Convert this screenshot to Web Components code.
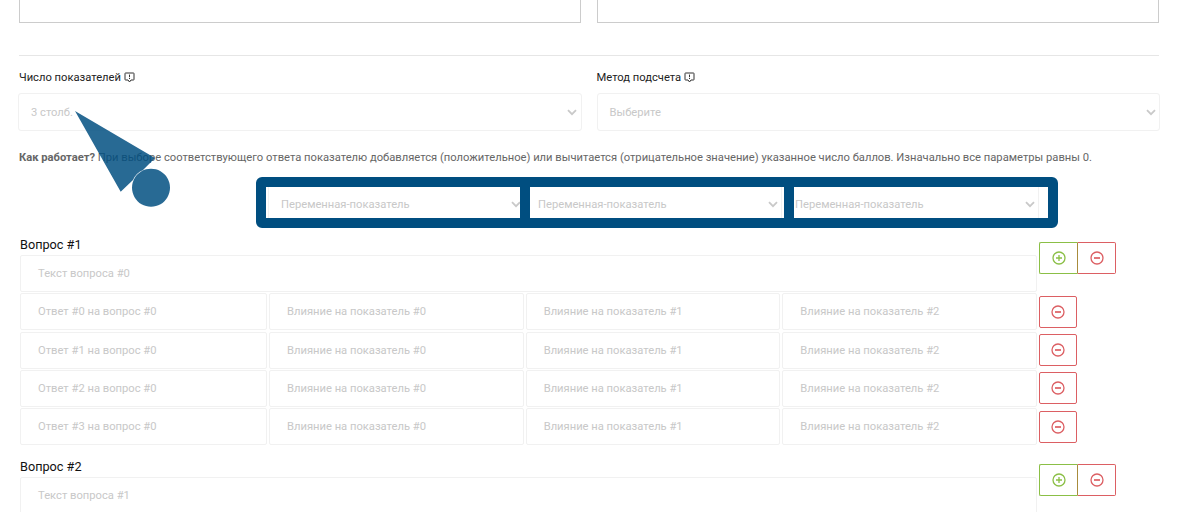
<!DOCTYPE html>
<html lang="ru">
<head>
<meta charset="utf-8">
<title>Тест</title>
<style>
    html, body { margin: 0; height: 512px; overflow: hidden; background: #fff; }
    body { font-family: 'Roboto', 'Liberation Sans', sans-serif; position: relative; }
</style>
</head>
<body>
<test-form></test-form>
<script>
const hintIcon = `<svg width="11" height="11" viewBox="0 0 11 11" fill="none" stroke="#333" stroke-width="1"><path d="M1.5 1h8a.5.5 0 0 1 .5.5v6a.5.5 0 0 1-.5.5H7L5.500 10 4 8H1.500a.5.5 0 0 1-.5-.5v-6a.5.5 0 0 1 .5-.5z"/><path d="M5.500 2.600v2.600M5.500 6v1"/></svg>`
const chevron = `<svg width="10" height="7" viewBox="0 0 10 7" fill="none" stroke="#c9c9c9" stroke-width="1.800"><path d="M1 1.200 5 5.200l4-4"/></svg>`

/**
 * A select look-alike with a placeholder and a chevron.
 */
customElements.define('form-select', class extends HTMLElement {
  constructor () {
    super()
    this.attachShadow({ mode: 'open' }).innerHTML = `
<style>
    :host { display: flex; align-items: center; justify-content: space-between; box-sizing: border-box; height: 38px; padding: 0 3.500px 0 12px; background: #fff; border: 1px solid #f1f1f1; border-radius: 3px; color: #c8c8c8; font-size: 11.200px; }
</style>
<slot></slot>${chevron}`
  }
})

/**
 * A text input look-alike that shows its placeholder.
 */
customElements.define('form-input', class extends HTMLElement {
  constructor () {
    super()
    this.attachShadow({ mode: 'open' }).innerHTML = `
<style>
    :host { display: flex; align-items: center; box-sizing: border-box; height: 37px; padding: 0 17px; background: #fff; border: 1px solid #f1f1f1; border-radius: 2px; color: #c8c8c8; font-size: 11.200px; white-space: nowrap; }
</style>
<slot></slot>`
  }
})

/**
 * A labelled select column.
 */
customElements.define('form-field', class extends HTMLElement {
  constructor () {
    super()
    this.attachShadow({ mode: 'open' }).innerHTML = `
<style>
    :host { display: flex; flex-direction: column; flex: 1 1 0; min-width: 0; }
    .label { display: flex; align-items: center; gap: 3px; height: 14px; margin-bottom: 9px; padding-left: var(--label-inset, 0); color: #222; font-size: 11.200px; }
</style>
<div class="label"><span id="text"></span>${hintIcon}</div>
<form-select><slot></slot></form-select>`
    this.shadowRoot.getElementById('text').textContent = this.getAttribute('label')
  }
})

/**
 * A square outlined button with a plus or minus in a circle.
 */
customElements.define('round-button', class extends HTMLElement {
  constructor () {
    super()
    const plus = this.getAttribute('kind') === 'plus'
    const bar = plus ? '<path d="M7 4v6M4 7h6"/>' : '<path d="M4 7h6" stroke-width="1.700"/>'
    this.attachShadow({ mode: 'open' }).innerHTML = `
<style>
    :host { display: flex; align-items: center; justify-content: center; box-sizing: border-box; width: 38px; height: 32px; background: #fff; border: 1px solid ${plus ? '#8bbf46' : '#dc5f63'}; border-radius: 2px; color: ${plus ? '#8bbf46' : '#dc5f63'}; flex: none; }
    :host([seam]) { width: 39px; border-right-color: #a88c3c; border-radius: 2px 0 0 2px; }
    :host([joined]) { border-left: 0; border-radius: 0 2px 2px 0; }
</style>
<svg width="14" height="14" viewBox="0 0 14 14" fill="none" stroke="currentColor" stroke-width="1.300"><circle cx="7" cy="7" r="6"/>${bar}</svg>`
  }
})

/**
 * One question: a heading, its text input and four answer rows.
 */
customElements.define('question-block', class extends HTMLElement {
  constructor () {
    super()
    const number = Number(this.getAttribute('number'))
    const answers = Number(this.getAttribute('answers'))
    const rows = Array.from({ length: answers }, (_, i) => `
<div class="row">
    <div class="cells">
        <form-input>Ответ #${i} на вопрос #0</form-input>
        <form-input>Влияние на показатель #0</form-input>
        <form-input>Влияние на показатель #1</form-input>
        <form-input>Влияние на показатель #2</form-input>
    </div>
    <round-button kind="minus"></round-button>
</div>`).join('')
    this.attachShadow({ mode: 'open' }).innerHTML = `
<style>
    :host { display: block; margin-top: 9px; }
    .head { display: flex; gap: 2px; }
    .main { width: 1017px; margin-left: 1px; flex: none; }
    .title { height: 18px; color: #111; font-size: 12.700px; line-height: 16px; }
    .buttons { display: flex; margin-top: 5px; height: 32px; }
    .row { display: flex; align-items: center; gap: 2px; margin-top: 1.330px; }
    .cells { display: grid; grid-template-columns: 247px 1fr 1fr 1fr; gap: 2px; width: 1017px; margin-left: 1px; flex: none; }
</style>
<div class="head">
    <div class="main">
        <div class="title">Вопрос #${number + 1}</div>
        <form-input>Текст вопроса #${number}</form-input>
    </div>
    <div class="buttons"><round-button kind="plus" seam></round-button><round-button kind="minus" joined></round-button></div>
</div>
${rows}`
  }
})

/**
 * The highlighted strip. Each window shows part of a select behind it,
 * so the selects sit off-centre inside their windows.
 */
customElements.define('variable-strip', class extends HTMLElement {
  constructor () {
    super()
    const windows = [2, -5, -12].map(offset => `
<div class="window"><form-select style="margin-left:${offset}px">Переменная-показатель</form-select></div>`).join('')
    this.attachShadow({ mode: 'open' }).innerHTML = `
<style>
    :host { display: grid; grid-template-columns: repeat(3, 254px); gap: 10px; box-sizing: border-box; width: 802px; margin: 12px 0 0 237px; border: 10px solid #004e80; border-radius: 6px; background: #004e80; }
    .window { height: 31px; overflow: hidden; background: #fff; }
    form-select { width: 257px; margin-top: -2px; border-radius: 0; }
</style>
${windows}`
  }
})

/**
 * The pointer of the guided tour, lying over the form.
 */
customElements.define('tour-pointer', class extends HTMLElement {
  constructor () {
    super()
    this.attachShadow({ mode: 'open' }).innerHTML = `
<style>
    :host { position: absolute; left: 70px; top: 106px; width: 104px; height: 104px; }
</style>
<svg width="104" height="104" viewBox="0 0 104 104" fill="#004e80" opacity=".84"><path d="M5 5 85 52 73 64A19 19 0 0 0 63 74L50.700 85.700ZM81 62.700a19 19 0 1 0 .01 0Z"/></svg>`
  }
})

/**
 * The whole form, scrolled a little down the page.
 */
customElements.define('test-form', class extends HTMLElement {
  constructor () {
    super()
    this.attachShadow({ mode: 'open' }).innerHTML = `
<style>
    :host { display: block; box-sizing: border-box; width: 1140px; margin: -20px 0 0 19px; }
    .top { display: flex; gap: 16px; }
    .top div { flex: 1; height: 43px; box-sizing: border-box; border: 1px solid #ccc; }
    hr { height: 1px; margin: 32px 0 14px; border: 0; background: #e6e6e6; }
    .fields { display: flex; gap: 15px; margin: 0 -1px; }
    .fields form-field:first-child { --label-inset: 1px; }
    p { margin: 20px 0 0; height: 14px; color: #666; font-size: 11.200px; line-height: 14px; white-space: nowrap; }
    b { font-weight: 700; }
</style>
<div class="top"><div></div><div></div></div>
<hr>
<div class="fields">
    <form-field label="Число показателей">3 столб.</form-field>
    <form-field label="Метод подсчета">Выберите</form-field>
</div>
<p><b>Как работает?</b> При выборе соответствующего ответа показателю добавляется (положительное) или вычитается (отрицательное значение) указанное число баллов. Изначально все параметры равны 0.</p>
<variable-strip></variable-strip>
<question-block number="0" answers="4"></question-block>
<question-block number="1" answers="0" style="margin-top:14px"></question-block>
<tour-pointer></tour-pointer>`
  }
})
</script>
</body>
</html>
